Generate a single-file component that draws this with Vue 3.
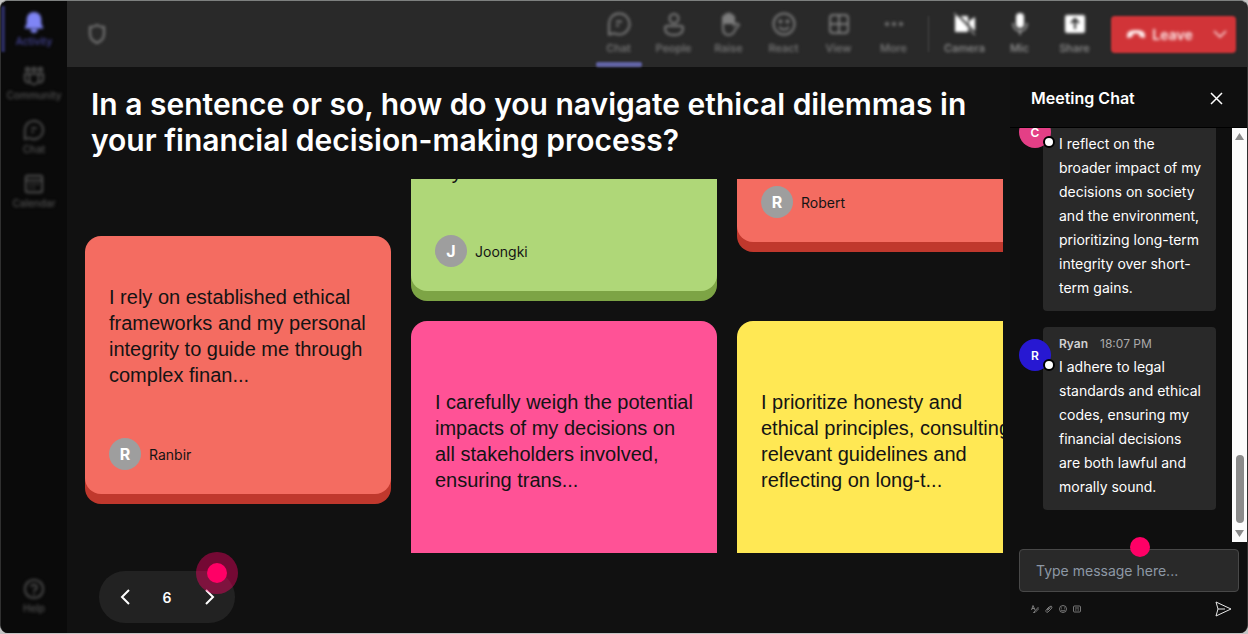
<script setup>
import { ref } from 'vue'

const sideItems = [
  { id: 'activity', label: 'Activity', active: true },
  { id: 'community', label: 'Community' },
  { id: 'chat', label: 'Chat' },
  { id: 'calendar', label: 'Calendar' },
]
const viewActions = [
  { id: 'chat', label: 'Chat', active: true },
  { id: 'people', label: 'People' },
  { id: 'raise', label: 'Raise' },
  { id: 'react', label: 'React' },
  { id: 'view', label: 'View' },
  { id: 'more', label: 'More' },
]
const deviceActions = [
  { id: 'camera', label: 'Camera' },
  { id: 'mic', label: 'Mic' },
  { id: 'share', label: 'Share' },
]
const cards = [
  { id: 1, author: 'Ranbir', tone: 'coral', place: 'lead', text: 'I rely on established ethical frameworks and my personal integrity to guide me through complex finan...' },
  { id: 2, author: 'Joongki', tone: 'green', place: 'upper', text: 'My values come first' },
  { id: 3, author: 'Robert', tone: 'coral', place: 'short' },
  { id: 4, tone: 'pink', place: 'tall', text: 'I carefully weigh the potential impacts of my decisions on all stakeholders involved, ensuring trans...' },
  { id: 5, tone: 'yellow', place: 'tall', text: 'I prioritize honesty and\nethical principles, consulting\nrelevant guidelines and\nreflecting on long-t...' },
]
const messages = [
  { name: 'Chris', time: '18:06 PM', tone: 'rose', text: 'I reflect on the broader impact of my decisions on society and the environment, prioritizing long-term integrity over short-term gains.' },
  { name: 'Ryan', time: '18:07 PM', tone: 'blue', text: 'I adhere to legal standards and ethical codes, ensuring my financial decisions are both lawful and morally sound.' },
]
const page = ref(6)
const draft = ref('')
</script>

<template>
  <div class="shell">
    <nav class="sidebar" aria-label="Apps">
      <button v-for="s in sideItems" :key="s.id" class="side-item" :class="{ active: s.active }">
        <svg class="side-icon" viewBox="0 0 24 24" fill="none" stroke="currentColor" stroke-width="2">
          <path v-if="s.id === 'activity'" fill="currentColor" stroke="none" d="M12 1a8 8 0 0 0-8 8v5l-2 4v1h20v-1l-2-4V9a8 8 0 0 0-8-8zM8 20a4 4 0 0 0 8 0z" />
          <template v-else-if="s.id === 'community'">
            <circle cx="5" cy="5" r="2" /><circle cx="12" cy="5" r="2" /><circle cx="19" cy="5" r="2" />
            <path d="M7 10h10v6a5 5 0 0 1-10 0zM7 10H2v5a4 4 0 0 0 5 4M17 10h5v5a4 4 0 0 1-5 4" />
          </template>
          <path v-else-if="s.id === 'chat'" d="M12 2a10 10 0 1 1-5 18.700l-5 1.300V12A10 10 0 0 1 12 2zM9 10h6M9 14h3" />
          <path v-else d="M5 3h14a2 2 0 0 1 2 2v14a2 2 0 0 1-2 2H5a2 2 0 0 1-2-2V5a2 2 0 0 1 2-2zM3 8h18M7 12h2M11 12h2M15 12h2M7 16h2M11 16h2" />
        </svg>
        <span>{{ s.label }}</span>
      </button>
      <button class="side-item help">
        <svg class="side-icon" viewBox="0 0 24 24" fill="none" stroke="currentColor" stroke-width="2">
          <circle cx="12" cy="12" r="10" /><path d="M9 10a3 3 0 1 1 4 3q-1 .5-1 2M12 17v2" />
        </svg>
        <span>Help</span>
      </button>
    </nav>

    <div class="workspace">
      <header class="topbar">
        <button class="shield" aria-label="Security">
          <svg width="20" height="22" viewBox="0 0 20 22" fill="none" stroke="currentColor" stroke-width="2">
            <path d="M10 2q3 2 7 2v7q0 6-7 9-7-3-7-9V4q4 0 7-2z" />
          </svg>
        </button>
        <div class="actions">
          <button v-for="a in viewActions" :key="a.id" class="action" :class="{ active: a.active }">
            <svg class="action-icon" viewBox="0 0 24 24" fill="none" stroke="currentColor" stroke-width="2">
              <path v-if="a.id === 'chat'" d="M12 1.500a10.500 10.500 0 1 1-5 19.700L2 22.500V12A10 10 0 0 1 12 1.500zM9 9.500h6M9 13.500h3" />
              <template v-else-if="a.id === 'people'">
                <circle cx="12" cy="6.500" r="4.500" /><path d="M5 14h14a2 2 0 0 1 2 2q0 7-9 7t-9-7a2 2 0 0 1 2-2z" />
              </template>
              <template v-else-if="a.id === 'raise'">
                <path fill="currentColor" d="M6 11V5q1-2 2.500 0V3q1-2 2.500 0V2q1-1 2.500 0v2q1-2 2.500 0v7z" />
                <path d="M6 10v6q0 7 6 7 4 0 6-5l4-5q-2-3-5 0V4" />
              </template>
              <template v-else-if="a.id === 'react'">
                <circle cx="12" cy="12" r="10.500" /><path d="M7 15q5 5 10 0" />
                <circle cx="8.500" cy="9.500" r="1" /><circle cx="15.500" cy="9.500" r="1" />
              </template>
              <path v-else-if="a.id === 'view'" d="M6 3h12a3 3 0 0 1 3 3v12a3 3 0 0 1-3 3H6a3 3 0 0 1-3-3V6a3 3 0 0 1 3-3zM12 3v18M3 12h18" />
              <g v-else fill="currentColor" stroke="none">
                <circle cx="5" cy="12" r="2" /><circle cx="12" cy="12" r="2" /><circle cx="19" cy="12" r="2" />
              </g>
            </svg>
            <span>{{ a.label }}</span>
          </button>
        </div>
        <span class="divider"></span>
        <div class="actions devices">
          <button v-for="a in deviceActions" :key="a.id" class="action">
            <svg class="action-icon" viewBox="0 0 24 24" fill="currentColor">
              <template v-if="a.id === 'camera'">
                <path d="M2 4h13v16H2zM16 9l6-4v14l-6-4z" />
                <path d="M3 1l20 21" stroke="#292929" stroke-width="2" /><path d="M1 1l21 22" stroke="currentColor" stroke-width="1" />
              </template>
              <template v-else-if="a.id === 'mic'">
                <rect x="8" y="1" width="8" height="15" rx="4" />
                <path d="M5 11q0 8 7 8t7-8M12 19v4" fill="none" stroke="currentColor" stroke-width="1" />
              </template>
              <template v-else>
                <rect x="2" y="3" width="20" height="18" rx="2" />
                <path d="M12 17V7M8 11l4-4 4 4" fill="none" stroke="#292929" stroke-width="2" />
              </template>
            </svg>
            <span>{{ a.label }}</span>
          </button>
        </div>
        <button class="leave">
          <svg width="20" height="14" viewBox="0 0 20 14" fill="currentColor"><path d="M1 8q0-5 9-5t9 5v2q0 1-1 1l-4-1q-1 0-1-3-3-1-6 0 0 3-1 3l-4 1q-1 0-1-1z" /></svg>
          <span>Leave</span>
          <svg class="leave-more" width="14" height="10" viewBox="0 0 14 10" fill="none" stroke="currentColor" stroke-width="1.500"><path d="M1 2l6 6 6-6" /></svg>
        </button>
      </header>

      <div class="content">
        <main class="stage">
          <h1>In a sentence or so, how do you navigate ethical dilemmas in your financial decision-making process?</h1>
          <section class="board">
            <div class="grid">
              <article v-for="c in cards" :key="c.id" class="card" :class="[c.tone, c.place]">
                <p v-if="c.text">{{ c.text }}</p>
                <footer v-if="c.author">
                  <span class="initial">{{ c.author[0] }}</span>
                  <span>{{ c.author }}</span>
                </footer>
              </article>
            </div>
          </section>
          <div class="stage-foot">
            <div class="pager">
              <button aria-label="Previous" @click="page--">
                <svg width="12" height="16" viewBox="0 0 12 16" fill="none" stroke="currentColor" stroke-width="2"><path d="M10 1L3 8l7 7" /></svg>
              </button>
              <span>{{ page }}</span>
              <button aria-label="Next" @click="page++">
                <svg width="12" height="16" viewBox="0 0 12 16" fill="none" stroke="currentColor" stroke-width="2"><path d="M3 1l7 7-7 7" /></svg>
              </button>
              <i class="hotspot halo"></i>
            </div>
          </div>
        </main>

        <aside class="chat">
          <header class="chat-head">
            <h2>Meeting Chat</h2>
            <button aria-label="Close chat">
              <svg width="13" height="13" viewBox="0 0 13 13" fill="none" stroke="currentColor" stroke-width="1.500"><path d="M1 1l11 11M12 1L1 12" /></svg>
            </button>
          </header>
          <div class="chat-scroll">
            <div class="messages">
              <div v-for="m in messages" :key="m.name" class="message">
                <span class="avatar" :class="m.tone">{{ m.name[0] }}<i></i></span>
                <div class="bubble">
                  <div class="meta"><strong>{{ m.name }}</strong><time>{{ m.time }}</time></div>
                  <p>{{ m.text }}</p>
                </div>
              </div>
            </div>
            <div class="track">
              <svg width="9" height="7" viewBox="0 0 9 7" fill="#8b8b8b"><path d="M4.500 0L9 7H0z" /></svg>
              <span class="thumb"></span>
              <svg width="9" height="7" viewBox="0 0 9 7" fill="#8b8b8b"><path d="M0 0h9L4.500 7z" /></svg>
            </div>
          </div>
          <form class="composer" @submit.prevent>
            <div class="field">
              <input v-model="draft" type="text" aria-label="Message" placeholder="Type message here...">
              <i class="hotspot"></i>
            </div>
            <div class="tools">
              <button type="button" aria-label="Format">
                <svg width="8" height="8" viewBox="0 0 16 16" fill="none" stroke="currentColor" stroke-width="1.500"><path d="M1 10L4 1l4 9M2 7h5M6 14l8-9 2 2-8 8-3 1z" /></svg>
              </button>
              <button type="button" aria-label="Attach">
                <svg width="8" height="8" viewBox="0 0 16 16" fill="none" stroke="currentColor" stroke-width="1.500"><path d="M4 10l6-7q3-2 4 1 0 2-2 4l-6 6q-3 2-4-1-1-2 1-4l6-6M5 11l6-6" /></svg>
              </button>
              <button type="button" aria-label="Emoji">
                <svg width="8" height="8" viewBox="0 0 16 16" fill="none" stroke="currentColor" stroke-width="1.500"><circle cx="8" cy="8" r="7" /><path d="M4 10q4 4 8 0M5 5v2M11 5v2" /></svg>
              </button>
              <button type="button" aria-label="GIF">
                <svg width="8" height="8" viewBox="0 0 16 16" fill="none" stroke="currentColor" stroke-width="1.500"><rect x="1" y="2" width="14" height="12" rx="2" /><path d="M4 6h8M4 10h3M9 10h3" /></svg>
              </button>
              <button type="submit" class="send" aria-label="Send">
                <svg width="17" height="16" viewBox="0 0 17 16" fill="none" stroke="currentColor"><path d="M1 1l15 7-15 7 2-7zM3 8h7" /></svg>
              </button>
            </div>
          </form>
        </aside>
      </div>
    </div>
  </div>
</template>

<style>
body { background: #c4c4c4; }
</style>

<style scoped>
* { box-sizing: border-box; }
h1, h2, p { margin: 0; }
button {
  display: flex;
  align-items: center;
  justify-content: center;
  padding: 0;
  border: 0;
  background: none;
  color: inherit;
  font: inherit;
}
svg { display: block; flex: none; }

.shell {
  display: flex;
  height: calc(100vh - 1px);
  overflow: hidden;
  border: 1px solid #303030;
  border-top-color: #7d807f;
  border-bottom: 0;
  border-radius: 8px;
  background: #111;
  color: #fff;
  font-family: Inter, "Liberation Sans", sans-serif;
}

.sidebar {
  display: flex;
  flex-direction: column;
  flex: none;
  width: 66px;
  padding: 5px 0 14px;
  background: #0a0a0a;
  color: #525252;
}
.side-item {
  flex-direction: column;
  gap: 1px;
  height: 46px;
  margin-bottom: 8px;
  font-size: 10px;
  font-weight: 500;
  line-height: 14px;
}
.side-icon { width: 22px; height: 22px; }
.side-item.active { color: #45459a; box-shadow: inset 4px 0 #2c2d60; }
.side-item.active .side-icon { color: #7f85f5; }
.side-item.help { margin: auto 0 0; }

.workspace { display: flex; flex: 1; flex-direction: column; min-width: 0; }
.topbar {
  display: flex;
  flex: none;
  align-items: center;
  height: 66px;
  padding: 0 11px 0 20px;
  background: #292929;
  color: #7c7c7c;
}
/* Controls outside the meeting area are kept out of focus. */
.topbar > *, .side-item { filter: blur(1px); }
.topbar button > *, .side-item > * { filter: blur(1px); }
.actions { display: flex; height: 100%; }
.shield { margin-right: auto; }
.action {
  position: relative;
  flex-direction: column;
  gap: 4px;
  width: 55px;
  font-size: 11px;
  font-weight: 500;
  line-height: 16px;
}
.action-icon { width: 24px; height: 24px; }
.devices .action-icon { color: #fff; }
.devices { color: #949494; }
.action.active::after {
  content: "";
  position: absolute;
  bottom: 0;
  left: 5px;
  width: 46px;
  height: 5px;
  border-radius: 2px;
  background: #6264a7;
}
.divider { width: 1px; height: 36px; margin: 0 8px 0 7px; background: #4a4a4a; }
.leave {
  gap: 6px;
  width: 125px;
  height: 37px;
  margin-left: 9px;
  padding-left: 6px;
  border-radius: 4px;
  background: #d13438;
  color: #ffeded;
  font-size: 14px;
  font-weight: 600;
}
.leave-more { margin-left: 14px; }

.content { display: flex; flex: 1; min-height: 0; }
.stage { display: flex; flex: 1; flex-direction: column; min-width: 0; }
h1 {
  margin: 19px 24px 21px;
  font-size: 30px;
  font-weight: 600;
  line-height: 36px;
}
.board {
  flex: 1;
  min-height: 0;
  margin: 0 7px 0 18px;
  overflow: hidden;
}
.grid {
  display: grid;
  grid-template-columns: repeat(3, 306px);
  grid-template-rows: 258px auto;
  align-items: start;
  gap: 30px 20px;
  margin-top: -146px;
}
.card {
  display: flex;
  flex-direction: column;
  min-height: 258px;
  padding: 24px;
  border-radius: 16px;
  color: #141414;
}
.card p {
  display: flex;
  flex: 1;
  align-items: center;
  margin-bottom: 26px;
  font: 20px/26px "Liberation Sans", sans-serif;
  white-space: pre-line;
}
.card footer { display: flex; align-items: center; gap: 8px; margin-top: auto; font-size: 14px; }
.card.lead { grid-row: span 2; margin-top: 203px; }
.card.upper p { align-items: flex-end; padding-bottom: 24px; }
.card.short { min-height: 209px; }
.card.tall { min-height: 298px; }
.card.tall p { margin-bottom: 58px; }
.coral { background: #f46c61; box-shadow: 0 10px #c0382d; }
.green { background: #afd778; box-shadow: 0 10px #7da445; }
.pink { background: #ff5296; box-shadow: 0 10px #c92566; }
.yellow { background: #ffe854; box-shadow: 0 10px #c9b322; }
.initial {
  display: grid;
  place-items: center;
  width: 32px;
  height: 32px;
  border-radius: 50%;
  background: #9e9e9e;
  color: #fff;
  font-size: 16px;
  font-weight: 700;
}
.stage-foot { flex: none; padding: 18px 32px 10px; }
.pager {
  position: relative;
  display: flex;
  align-items: center;
  justify-content: space-between;
  width: 136px;
  height: 52px;
  padding: 0 20px;
  border-radius: 26px;
  background: #222;
  font-size: 14px;
  font-weight: 600;
}
.hotspot {
  position: absolute;
  width: 20px;
  height: 20px;
  border-radius: 50%;
  background: #ff0066;
}
.halo { top: -8px; right: 8px; box-shadow: 0 0 0 11px rgb(255 0 102 / 42%); }

.chat {
  display: flex;
  flex: none;
  flex-direction: column;
  width: 237px;
  background: #0f0f0f;
}
.chat-head {
  display: flex;
  flex: none;
  align-items: center;
  justify-content: space-between;
  height: 61px;
  padding: 2px 24px 0 21px;
  border-bottom: 1px solid #000;
}
h2 { font-size: 16px; font-weight: 600; line-height: 24px; }
.chat-scroll { display: flex; flex: 1; min-height: 0; overflow: hidden; }
.messages {
  display: flex;
  flex: 1;
  flex-direction: column;
  justify-content: flex-end;
  gap: 16px;
  padding: 0 16px 32px 9px;
}
.message { display: flex; align-items: flex-start; }
.avatar {
  position: relative;
  display: grid;
  flex: none;
  place-items: center;
  width: 32px;
  height: 32px;
  margin: 12px -8px 0 0;
  border-radius: 50%;
  font-size: 12px;
  font-weight: 600;
}
.avatar i {
  position: absolute;
  right: -4px;
  bottom: 0;
  width: 12px;
  height: 12px;
  border: 2px solid #000;
  border-radius: 50%;
  background: #fff;
}
.rose { background: #e43f86; }
.blue { background: #2718d2; }
.bubble {
  flex: 1;
  padding: 6px 14px 11px 16px;
  border-radius: 4px;
  background: #292929;
  font-size: 14px;
  line-height: 24px;
}
.meta { display: flex; gap: 12px; color: #aaa; font-size: 12px; line-height: 22px; }
.meta strong { color: #d0d0d0; font-weight: 600; }
.track {
  display: flex;
  flex: none;
  flex-direction: column;
  align-items: center;
  width: 15px;
  padding: 5px 0;
  background: #fcfcfc;
}
.thumb { width: 8px; height: 68px; margin: auto 0 7px; border-radius: 4px; background: #8b8b8b; }
.composer { flex: none; padding: 7px 8px 16px 9px; }
.field { position: relative; }
.field .hotspot { top: -12px; left: 111px; }
input {
  display: block;
  width: 100%;
  height: 43px;
  padding: 0 16px;
  border: 1px solid #484848;
  border-radius: 4px;
  outline: 0;
  background: #292929;
  color: #fff;
  font: 14px/20px Inter, sans-serif;
}
input::placeholder { color: #8d98a5; opacity: 1; }
.tools {
  display: flex;
  align-items: center;
  gap: 6px;
  height: 16px;
  margin-top: 9px;
  padding: 0 7px 0 12px;
  color: #999;
}
.send { margin-left: auto; color: #e8e8e8; }
</style>
